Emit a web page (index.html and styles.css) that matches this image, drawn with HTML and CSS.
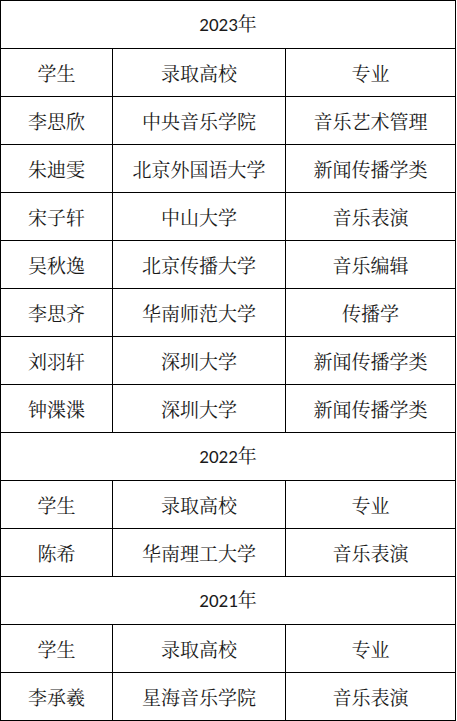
FILE: index.html
```html
<!DOCTYPE html>
<html lang="zh-CN">
<head>
<meta charset="utf-8">
<title>录取名单</title>
<link rel="stylesheet" href="styles.css">
</head>
<body>
<table class="admit">
  <colgroup>
    <col class="c-name">
    <col class="c-school">
    <col class="c-major">
  </colgroup>
  <tbody>
    <tr><td class="year" colspan="3">2023年</td></tr>
    <tr><td>学生</td><td>录取高校</td><td>专业</td></tr>
    <tr><td>李思欣</td><td>中央音乐学院</td><td>音乐艺术管理</td></tr>
    <tr><td>朱迪雯</td><td>北京外国语大学</td><td>新闻传播学类</td></tr>
    <tr><td>宋子轩</td><td>中山大学</td><td>音乐表演</td></tr>
    <tr><td>吴秋逸</td><td>北京传播大学</td><td>音乐编辑</td></tr>
    <tr><td>李思齐</td><td>华南师范大学</td><td>传播学</td></tr>
    <tr><td>刘羽轩</td><td>深圳大学</td><td>新闻传播学类</td></tr>
    <tr><td>钟渫渫</td><td>深圳大学</td><td>新闻传播学类</td></tr>
    <tr><td class="year" colspan="3">2022年</td></tr>
    <tr><td>学生</td><td>录取高校</td><td>专业</td></tr>
    <tr><td>陈希</td><td>华南理工大学</td><td>音乐表演</td></tr>
    <tr><td class="year" colspan="3">2021年</td></tr>
    <tr><td>学生</td><td>录取高校</td><td>专业</td></tr>
    <tr><td>李承羲</td><td>星海音乐学院</td><td>音乐表演</td></tr>
  </tbody>
</table>
</body>
</html>
```
FILE: styles.css
```css
html, body {
  margin: 0;
  padding: 0;
  background: #ffffff;
}

.admit {
  border-collapse: separate;
  border-spacing: 0;
  table-layout: fixed;
  width: 456px;
  border-top: 1px solid #000;
  border-left: 1px solid #000;
  font-family: "Noto Serif CJK SC", "Noto Sans CJK SC", serif;
  font-size: 19px;
  color: #1a1a1a;
}

.c-name { width: 112px; }
.c-school { width: 173px; }
.c-major { width: 170px; }

.admit td {
  box-sizing: border-box;
  height: 48px;
  padding: 0;
  border-right: 1px solid #000;
  border-bottom: 1px solid #000;
  text-align: center;
  vertical-align: middle;
  line-height: 1;
  white-space: nowrap;
}

.admit td.year {
  font-family: "Carlito", "Liberation Sans", "Noto Serif CJK SC", "Noto Sans CJK SC", sans-serif;
  font-size: 19px;
}
```
